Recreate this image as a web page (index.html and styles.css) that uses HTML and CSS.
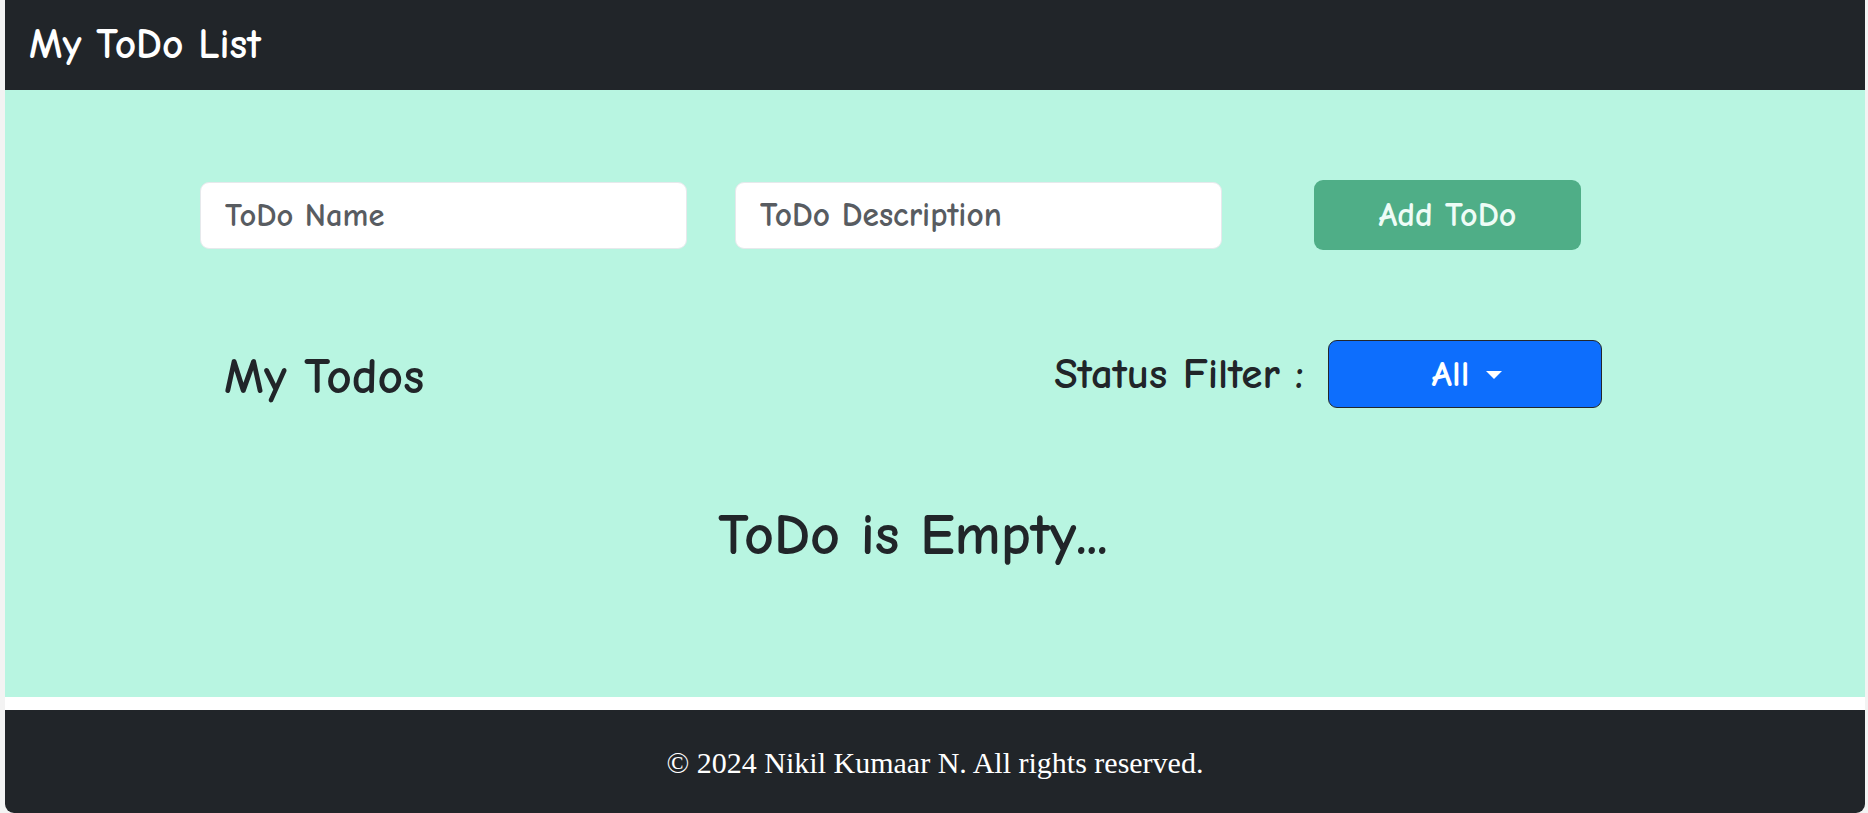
FILE: index.html
```html
<!DOCTYPE html>
<html lang="en">
<head>
<meta charset="utf-8">
<title>My ToDo List</title>
<link rel="stylesheet" href="styles.css">
</head>
<body>
<div class="app">
  <header class="navbar">
    <h1 class="brand">My ToDo List</h1>
  </header>
  <main class="main">
    <div class="container">
      <form class="add-form">
        <input class="field field-name" type="text" placeholder="ToDo Name">
        <input class="field field-desc" type="text" placeholder="ToDo Description">
        <button class="add-btn" type="button">Add ToDo</button>
      </form>
      <div class="filter-row">
        <h2 class="section-title">My Todos</h2>
        <div class="filter">
          <span class="filter-label">Status Filter :</span>
          <button class="dropdown" type="button">All <span class="caret"></span></button>
        </div>
      </div>
      <p class="empty">ToDo is Empty...</p>
    </div>
  </main>
  <footer class="footer">
    <p class="copy">© 2024 Nikil Kumaar N. All rights reserved.</p>
  </footer>
</div>
</body>
</html>
```
FILE: styles.css
```css
* { box-sizing: border-box; }
html, body { margin: 0; padding: 0; }
body {
  background: #f3f3f3;
  font-family: "Comic Sans MS", "Comic Neue", "Noto Sans", sans-serif;
  font-weight: 700;
  color: #212529;
}
.app {
  margin: 0 3px 0 5px;
  height: 813px;
  display: flex;
  flex-direction: column;
  background: #fff;
  border-radius: 0 0 9px 9px;
  overflow: hidden;
}
.navbar {
  background: #212529;
  height: 90px;
  display: flex;
  align-items: center;
  padding-left: 24px;
}
.brand {
  margin: 0;
  color: #fff;
  font-size: 41.5px;
  font-weight: 700;
  line-height: 1;
}
.main {
  background: #b8f5e1;
  height: 607px;
}
.container {
  margin: 0 239px 0 195px;
  padding-top: 90px;
}
.add-form {
  display: flex;
  align-items: center;
  height: 70px;
}
.field {
  width: 487px;
  height: 67px;
  border: 1px solid #e6e9ec;
  border-radius: 9px;
  background: #fff;
  padding: 0 24px;
  font-family: inherit;
  font-weight: 700;
  font-size: 32.5px;
  color: #212529;
  margin-right: 48px;
}
.field-desc {
  font-size: 33.3px;
  margin-right: 92px;
}
.field::placeholder { color: #585c61; }
.add-btn {
  width: 267px;
  height: 70px;
  border: none;
  border-radius: 9px;
  background: #4fae87;
  color: #eefcf6;
  font-family: inherit;
  font-weight: 700;
  font-size: 34px;
}
.filter-row {
  margin-top: 90px;
  display: flex;
  align-items: center;
  justify-content: space-between;
  padding: 0 24px;
  height: 68px;
}
.section-title {
  margin: 0;
  font-size: 49.5px;
  font-weight: 700;
  line-height: 1;
  padding-top: 6px;
}
.filter {
  display: flex;
  align-items: center;
  gap: 24px;
}
.filter-label {
  font-size: 43px;
  line-height: 1;
}
.dropdown {
  width: 274px;
  height: 68px;
  background: #0d6efd;
  border: 1px solid #23272b;
  border-radius: 9px;
  color: #fff;
  font-family: inherit;
  font-weight: 700;
  font-size: 37px;
  display: flex;
  align-items: center;
  justify-content: center;
  gap: 17px;
  padding: 0 0 0 4px;
}
.caret {
  width: 0;
  height: 0;
  border-left: 8px solid transparent;
  border-right: 8px solid transparent;
  border-top: 8px solid #fff;
  margin-top: 2px;
}
.empty {
  margin: 92px 0 0;
  text-align: center;
  font-size: 58px;
  line-height: 1.25;
}
.footer {
  margin-top: 13px;
  flex: 1;
  background: #212529;
  display: flex;
  align-items: center;
  justify-content: center;
}
.copy {
  margin: 0;
  color: #fff;
  font-family: "Liberation Serif", "Times New Roman", serif;
  font-weight: 400;
  font-size: 30px;
  line-height: 1;
  padding-top: 3px;
}
```
